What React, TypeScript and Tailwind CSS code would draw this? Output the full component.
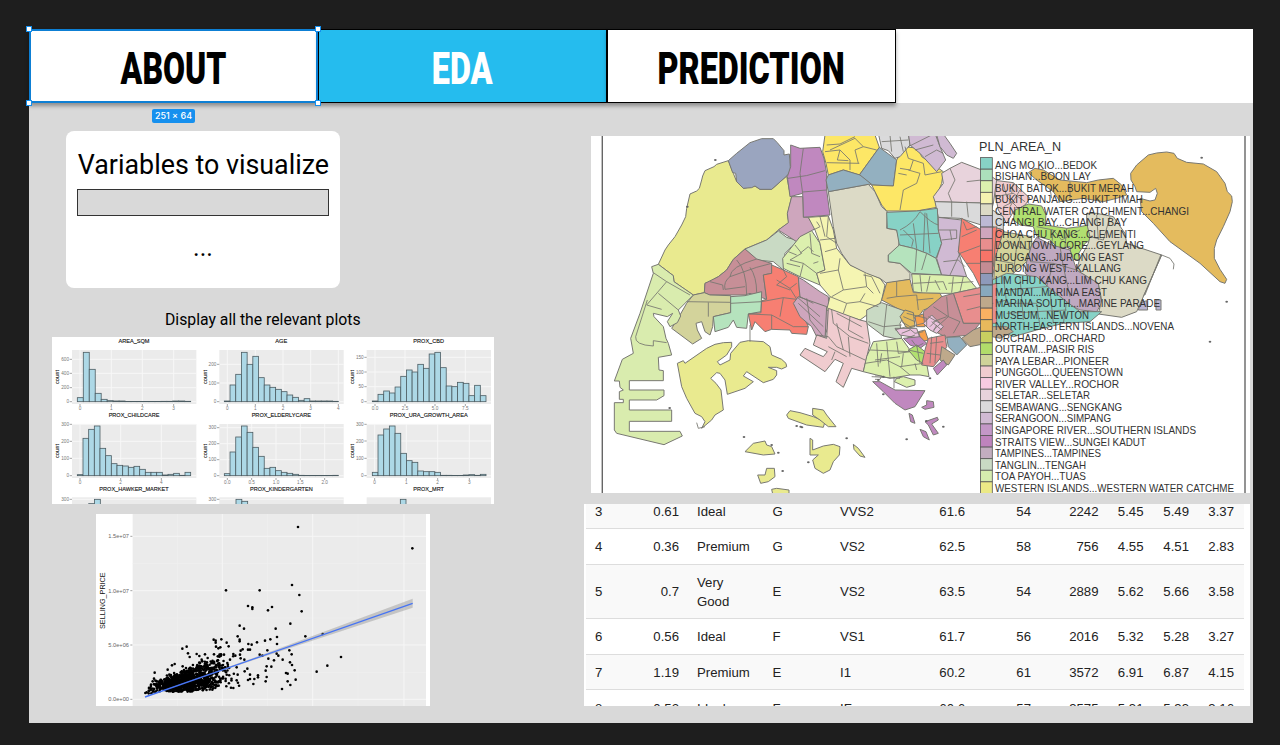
import React from "react";

type Shape = [fill: string, points: string];

const C = {
  yellow: "#e9ea8f", slate: "#9aa5bf", purple: "#c088bf", mauve: "#cea6bd", sage: "#c9dac4", lime: "#dcf0ae",
  cream: "#f5f5b2", beige: "#dcdac6", gold: "#fde766", steel: "#93b0c0", gray: "#dadadb", lilac: "#d0bad3",
  pink: "#e8d3dc", teal: "#87d2c6", mint: "#b5e3bd", red: "#f77f72", orange: "#e4bb5e", salmon: "#e88e8e",
  rose: "#c78f97", blush: "#f0cccf", tan: "#bea98b", tuas: "#d9ecae", olive: "#d3d39b", leaf: "#b1e070",
};

const west: Shape[] = [
  [C.yellow, "415,92 380,103 372,110 345,122 338,138 335,150 328,175 320,183 300,192 290,235 287,260 275,285 255,320 235,345 225,360 205,403 250,437 252,455 285,478 310,495 343,488 345,460 360,455 385,440 410,420 430,388 465,357 530,330 565,300 597,278 592,255 605,200 598,180 590,138 545,178 510,178 495,168 460,175 440,155 430,130"],
  [C.slate, "415,92 440,70 480,38 515,26 550,26 562,38 582,62 582,75 598,72 602,125 590,138 545,178 510,178 495,168 485,173 460,175 440,155 437,130 428,128"],
  [C.sage, "465,357 530,330 565,303 590,322 610,328 625,335 605,350 585,370 580,420 550,395 500,390"],
  [C.rose, "343,488 345,460 385,440 410,420 430,388 465,357 500,387 545,400 545,430 520,435 530,508 480,490 465,495 358,495"],
  [C.olive, "310,495 343,488 360,495 422,497 422,548 370,560 368,590 360,615 345,605 335,575 318,580 322,600 335,625 308,642 245,595 270,555 290,520"],
  [C.mint, "422,500 465,497 515,485 513,545 475,552 470,595 440,592 430,570 415,592 375,605 370,560 422,548"],
  [C.red, "545,405 580,420 625,440 628,480 635,545 655,590 650,613 605,610 600,600 545,598 525,605 495,575 485,600 475,552 513,548 515,512 530,508 520,435 545,430"],
  [C.mauve, "625,442 640,450 690,485 715,500 718,580 700,630 670,590 650,580 635,545 628,480"],
  [C.tuas, "185,410 205,403 250,437 252,455 310,495 265,540 272,558 262,578 240,590 232,575 248,550 232,560 190,550 192,560 220,590 228,625 235,640 245,675 205,682 207,720 220,722 220,752 118,752 118,780 222,780 222,797 200,810 118,810 118,840 245,840 245,874 118,874 118,904 270,904 277,918 222,944 80,910 73,900 73,818 100,818 100,808 88,808 88,785 100,780 90,772 88,753 73,753 97,688 130,670 122,625 150,550 190,430"],
  [C.yellow, "262,700 280,692 285,700 350,655 375,643 400,638 425,637 425,650 410,675 382,695 390,705 420,690 422,670 450,637 475,632 520,635 540,650 545,675 575,688 588,700 590,710 575,717 560,712 535,712 560,722 560,735 550,748 520,758 470,725 460,738 490,755 465,775 412,793 405,750 390,730 380,728 362,745 378,760 393,780 400,840 375,855 365,870 335,895 345,875 335,860 315,850 290,805 275,770"],
  [C.yellow, "465,965 490,940 525,933 530,945 545,950 555,972 520,975"],
  [C.yellow, "503,1035 525,1035 530,1015 553,1015 555,1040 535,1055 512,1060"],
  [C.yellow, "545,1078 560,1075 597,1080 597,1092 548,1092"],
];

const east: Shape[] = [
  [C.purple, "-28,45 0,55 60,52 72,85 80,130 80,180 90,255 10,262 8,190 -30,200 -38,140 -28,110"],
  [C.mauve, "-25,200 8,200 10,262 25,262 45,295 10,320 -10,335 -65,300 -35,278 -38,250"],
  [C.lime, "0,320 35,302 60,340 75,420 50,430 60,465 0,440 -50,415 -52,385 -20,345"],
  [C.cream, "25,262 85,258 100,300 110,355 150,405 240,445 255,465 245,510 235,530 180,570 80,540 90,500 60,465 50,430 75,420 60,340 45,300"],
  [C.beige, "85,185 205,163 225,185 245,230 262,245 260,295 290,300 298,330 295,355 265,375 265,395 300,400 330,430 330,448 260,460 240,445 200,430 150,405 125,370 110,340 100,290"],
  [C.gold, "75,15 225,15 238,52 178,135 130,120 85,135 78,100 68,65"],
  [C.steel, "238,52 290,90 280,168 215,165 178,135"],
  [C.steel, "85,135 130,120 180,135 215,163 205,163 85,185 78,150"],
  [C.gold, "315,50 355,55 365,80 430,125 425,160 405,210 410,232 350,243 260,243 245,225 215,165 280,168 290,90"],
  [C.gray, "235,10 325,10 330,45 300,80 285,85 265,62 245,55"],
  [C.lilac, "325,10 405,10 420,50 437,90 410,125 360,70 330,45"],
  [C.lilac, "410,15 430,12 450,40 470,70 460,85 440,75 420,50"],
  [C.pink, "425,130 450,115 485,97 545,120 590,150 580,220 405,215 400,200 430,160"],
  [C.gray, "405,215 580,220 560,290 480,265 415,262"],
  [C.teal, "260,247 350,243 412,235 415,300 425,340 408,385 380,370 340,355 298,345 290,300 262,295"],
  [C.mint, "298,345 340,355 380,370 408,385 425,435 335,430 300,400 265,395 265,375"],
  [C.lilac, "415,262 485,270 485,310 475,365 500,440 425,435 410,385 425,340 415,300"],
  [C.red, "485,265 545,300 590,290 580,410 540,470 520,430 475,365"],
  [C.lime, "335,432 425,435 500,440 530,475 460,490 370,490 340,485"],
  [C.orange, "260,458 330,448 340,488 420,490 428,505 400,530 370,540 350,568 310,545 245,510"],
  [C.salmon, "460,490 530,475 590,460 590,580 490,580"],
  [C.rose, "425,500 460,490 490,580 540,580 510,615 440,622 395,600 370,575 370,545"],
  [C.sage, "200,540 245,518 320,545 300,580 305,630 250,618 200,580"],
  [C.mauve, "-5,500 80,530 75,630 50,620 35,590 0,560 -20,520"],
  [C.blush, "85,535 180,570 200,575 210,640 190,725 155,715 130,772 108,755 130,700 105,688 75,725 0,675 15,655 70,680 82,665 40,645 50,615 80,625"],
  [C.lime, "220,635 305,625 330,660 380,700 387,740 360,735 330,735 270,745 190,725 200,680"],
  [C.orange, "300,560 315,540 340,548 345,590 320,595"],
  ["#f7a04c", "345,560 370,552 375,590 350,590"],
  ["#f7a04c", "355,605 375,600 385,630 365,635"],
  ["#e9c2dd", "370,580 395,555 430,590 410,610 390,600"],
  ["#e9c2dd", "285,595 350,595 360,625 300,615"],
  [C.purple, "310,625 360,620 380,640 360,655 330,645"],
  [C.leaf, "325,660 350,645 375,665 370,700 350,690"],
  [C.salmon, "385,625 435,615 440,650 425,680 400,710 365,705 375,660"],
  [C.steel, "440,622 480,620 500,645 470,675 445,650"],
  [C.tan, "485,625 520,600 545,590 575,580 560,640 510,650"],
  [C.tan, "425,650 465,675 445,705 420,690"],
  [C.purple, "400,715 430,690 440,705 412,735"],
  [C.lime, "283,755 290,745 310,740 345,750 345,765 320,772"],
  [C.purple, "218,755 240,755 285,780 375,782 345,830 315,840 285,820 250,785"],
  [C.purple, "365,832 380,825 380,812 400,815 402,832 375,838"],
  [C.purple, "327,850 337,855 345,880 332,875"],
  [C.purple, "360,898 378,905 388,930 370,920"],
  [C.purple, "375,875 412,862 415,870 395,882 415,910 400,915 385,885"],
  [C.yellow, "-40,855 -30,842 0,848 40,860 75,875 70,892 20,885 -35,865"],
  [C.yellow, "38,835 70,840 80,855 108,890 85,890 60,870 38,855"],
  [C.yellow, "30,925 38,930 38,960 70,948 100,943 120,950 118,975 100,995 90,1020 70,1030 45,1015 38,990 55,975 30,975"],
  [C.yellow, "160,943 175,955 195,982 180,978 162,958"],
];

const farEast: Shape[] = [
  [C.orange, "482,130 500,105 535,75 560,69 590,66 612,70 622,85 650,97 700,102 740,125 765,160 772,185 785,198 787,215 780,245 760,290 740,330 733,355 733,385 750,418 770,448 765,460 750,455 690,400 600,335 550,280 515,245 510,205 540,213 555,210 562,190 557,175 540,187 500,185 495,170 483,150"],
  [C.orange, "175,128 195,115 220,120 270,150 350,158 385,150 430,145 455,165 470,195 440,205 400,215 340,205 270,215 250,185 200,150"],
  [C.blush, "67,150 130,158 180,205 165,225 130,245 110,280 85,240"],
  [C.gray, "67,240 100,260 100,300 67,290"],
  [C.red, "67,290 100,300 105,320 90,345 67,440"],
  [C.olive, "100,305 185,320 185,345 170,395 130,430 70,470 75,385"],
  [C.leaf, "130,270 135,240 175,222 215,228 228,255 225,285 290,295 330,290 355,285 362,330 345,340 325,372 328,390 305,388 300,350 265,355 240,330 200,318 190,290 150,285"],
  ["#bfa9c0", "200,322 245,345 300,360 320,420 385,460 395,520 380,545 330,540 290,520 200,455 165,430 170,395 185,345"],
  [C.beige, "350,250 380,250 430,260 465,310 470,340 575,375 520,500 500,545 455,562 385,552 395,510 385,460 320,420 328,390 355,340 360,320 350,280"],
  [C.teal, "67,450 110,430 200,440 245,480 290,515 330,545 395,545 360,575 280,580 200,600 130,620 90,600 67,590"],
  [C.tan, "67,590 110,590 130,605 90,625 67,620"],
  ["#b9b5d2", "513,518 530,512 533,540 505,540"],
  ["#b9b5d2", "558,510 573,510 573,540 558,540"],
];

const westLines =
  "M190,428 L230,455 L170,525 M230,455 L300,495 M205,490 L265,540 M170,525 L215,538 M172,510 L137,620 Q133,645 190,648 L190,632 L230,638 M440,390 Q470,420 470,495 M500,387 Q420,410 420,440 Q400,455 405,478 L465,470 M480,412 Q500,440 500,488 M420,440 L500,412 L545,400 M360,455 L398,465 L400,480 M290,515 L422,517 M355,517 L355,560 M422,520 L515,515 M515,515 L580,503 L570,560 M580,503 L635,510 M475,552 L545,555 L610,590 L655,590 M545,555 L545,598 M560,450 L600,475 L628,520 M600,475 L620,460 M580,420 L590,440 L560,465 L600,480 M480,585 L480,635 M320,878 L325,895 L345,890 M605,235 L640,235 M608,270 Q630,260 642,262";

const eastLines =
  "M10,55 L0,130 L8,190 M-36,145 Q20,140 75,122 M8,186 L80,180 M90,60 L165,25 L190,50 L165,60 L175,100 M75,65 L120,60 L150,90 L150,120 M120,60 L112,90 L145,92 M80,98 L178,100 M165,20 L120,42 L80,45 M190,50 L230,60 M245,35 L325,30 M270,15 L275,65 M300,20 L310,65 M325,50 L395,15 M345,60 L400,45 M375,80 L410,60 L430,70 M315,50 L325,85 L340,90 L330,120 L300,115 M325,120 L360,130 L350,160 L310,180 L300,240 M340,90 L370,100 L375,135 L425,125 M295,130 L320,135 M450,115 L465,150 L445,190 L455,215 M500,155 L545,150 M500,215 L505,262 M455,215 L455,260 M300,300 Q340,280 360,245 Q395,280 415,285 M375,248 L370,365 M300,315 L415,310 M340,280 L350,355 L345,425 M380,250 L390,370 M310,300 L340,330 L335,350 M380,370 L365,420 M415,300 L470,300 L470,325 L425,330 M450,300 L455,330 M430,395 L475,390 L495,410 M450,435 L480,370 M485,320 L530,300 M480,370 L560,340 M490,275 L500,300 L530,290 M500,400 L580,400 M340,460 L430,455 L440,480 M360,435 L365,485 M390,438 L380,485 M405,450 L420,480 M460,440 L455,488 M490,440 L480,485 M445,460 L520,455 M290,455 L290,500 L350,495 L355,540 M290,500 L260,505 M350,510 L400,505 M440,500 L445,560 L480,575 M400,530 L445,560 M490,500 L550,490 M500,540 L580,520 M445,560 L400,600 M40,300 L60,290 L50,275 M60,260 L75,320 M85,260 L80,320 L110,340 M60,330 L105,325 M75,365 L110,355 M60,430 L115,420 L120,385 M115,420 L130,480 L95,500 M130,480 L200,470 L220,490 M200,470 L195,430 M190,435 L215,440 L240,490 M90,500 L140,520 L180,515 L235,530 M140,520 L130,550 M180,515 L195,490 M-15,345 L5,370 L-30,390 L10,400 L0,440 M-35,365 L-10,375 M0,370 L25,350 L40,365 M10,400 L50,430 M-40,400 L0,410 M30,310 L35,370 L60,380 M40,400 L55,395 M0,500 L40,520 M-5,520 L70,590 M20,505 L30,570 L70,620 M-10,500 L60,560 M95,540 L100,580 L150,620 L205,640 M150,560 L145,600 L190,625 M110,550 L185,590 M50,615 L85,620 L110,650 L195,690 M110,580 L130,660 M145,620 L150,680 M85,650 L140,680 M95,690 L105,665 M260,525 L250,618 M205,575 L250,590 L305,585 M305,575 L330,590 L370,580 M310,560 L345,575 M320,550 L380,565 L380,590 M285,600 L320,590 L345,610 L370,605 M305,610 L330,600 M320,625 L345,615 M335,630 L350,650 L370,640 M385,560 L420,580 M390,590 L410,570 M395,575 L425,600 M400,605 L410,585 M325,660 L370,670 M350,645 L360,700 M390,640 L430,635 M395,620 L390,700 M380,670 L420,675 M410,620 L405,700 M440,560 L400,575 M480,575 L460,610 M210,660 L330,665 M230,640 L235,710 M260,635 L270,740 M290,635 L295,670 L330,665 M195,700 L260,690 L300,710 L370,700 M310,670 L305,710 M225,690 L300,680 M245,670 L240,700 M300,710 L330,735 M345,700 L350,720 M215,740 L300,745 M282,740 L282,775 M225,738 L245,738 L240,748 L225,748";

const farEastLines =
  "M575,375 L520,500 M573,373 L525,495 M575,375 L600,385 L612,402 L610,418 M470,340 L500,350 M100,160 L110,200 L140,230 M75,200 L130,190 L165,215 M100,230 L130,215 M150,180 L120,230 M130,160 L125,190 M200,290 L250,300 L245,345 M250,300 L275,330 L330,300 M290,295 L285,350 M180,395 L250,400 L320,420 M250,400 L230,470 M270,350 L280,410 L300,500 M110,330 L140,350 L130,430 M75,390 L130,400 M150,320 L145,350 L180,360 M100,440 L110,520 L200,520 L210,590 M110,480 L230,470 M150,440 L160,570 M70,520 L110,510 M110,550 L290,540 M240,480 L250,580 M290,515 L280,580 M360,320 L400,330 L420,260 M380,255 L385,330 M240,175 L245,205 M300,155 L300,205";

const specks: [number, number][] = [[376, 90], [292, 230], [239, 834], [462, 921], [620, 888], [632, 890], [578, 1023], [565, 968], [770, 925], [655, 997], [636, 892], [1835, 83], [1910, 515], [1860, 635], [950, 928], [545, 945], [1009, 873], [1060, 890], [880, 793], [880, 740], [1020, 745], [865, 750]];

const legend: [string, string, number][] = [
  ["ANG MO KIO...BEDOK", "#87d2c6", 102], ["BISHAN...BOON LAY", "#acdfbb", 96], ["BUKIT BATOK...BUKIT MERAH", "#dcf0ae", 139],
  ["BUKIT PANJANG...BUKIT TIMAH", "#f5f2b0", 148], ["CENTRAL WATER CATCHMENT...CHANGI", "#dcdac6", 194], ["CHANGI BAY...CHANGI BAY", "#bcb9d4", 132],
  ["CHOA CHU KANG...CLEMENTI", "#cea6bd", 141], ["DOWNTOWN CORE...GEYLANG", "#e88e8e", 149], ["HOUGANG...JURONG EAST", "#f77468", 129],
  ["JURONG WEST...KALLANG", "#c48c94", 126], ["LIM CHU KANG...LIM CHU KANG", "#8e9aba", 152], ["MANDAI...MARINA EAST", "#88a9bd", 112],
  ["MARINA SOUTH...MARINE PARADE", "#bea98b", 165], ["MUSEUM...NEWTON", "#fab062", 94], ["NORTH-EASTERN ISLANDS...NOVENA", "#e8b95c", 179],
  ["ORCHARD...ORCHARD", "#c8cf60", 110], ["OUTRAM...PASIR RIS", "#b1dc6a", 99], ["PAYA LEBAR...PIONEER", "#cfd399", 114],
  ["PUNGGOL...QUEENSTOWN", "#f0cccf", 128], ["RIVER VALLEY...ROCHOR", "#f7cbe1", 124], ["SELETAR...SELETAR", "#e8d3dc", 95],
  ["SEMBAWANG...SENGKANG", "#dadadb", 127], ["SERANGOON...SIMPANG", "#d0bad3", 116], ["SINGAPORE RIVER...SOUTHERN ISLANDS", "#c397c7", 201],
  ["STRAITS VIEW...SUNGEI KADUT", "#be83bd", 151], ["TAMPINES...TAMPINES", "#c2adbf", 106], ["TANGLIN...TENGAH", "#c9dac4", 91],
  ["TOA PAYOH...TUAS", "#d5ecae", 91], ["WESTERN ISLANDS...WESTERN WATER CATCHME", "#ebe986", 239],
];

function Regions({ shapes, lines, x }: { shapes: Shape[]; lines: string; x: number }) {
  return (
    <g transform={`translate(${x} 0)`} stroke="#777771" strokeWidth="3" strokeLinejoin="round">
      {shapes.map(([fill, points], i) => (
        <polygon key={i} points={points} fill={fill} />
      ))}
      <path d={lines} fill="none" strokeWidth="2.6" />
    </g>
  );
}

function PlanningMap() {
  return (
    <svg className="ml-[7px] block h-[357px] w-[659px] bg-white" viewBox="591 136 659 357">
      <g transform="translate(590 130) scale(0.33333)">
        <Regions shapes={west} lines={westLines} x={0} />
        <Regions shapes={farEast} lines={farEastLines} x={1140} />
        <Regions shapes={east} lines={eastLines} x={630} />
        {specks.map(([x, y], i) => (
          <ellipse key={i} cx={x} cy={y} rx="4" ry="3" fill="#666" />
        ))}
      </g>
      <path d="M602.3 136V493M1245 136V493" stroke="#666" strokeWidth="1.4" />
      <text x="979" y="151" fontSize="13" textLength="82" lengthAdjust="spacingAndGlyphs" fill="#333" fontFamily="Liberation Sans, sans-serif">
        PLN_AREA_N
      </text>
      {legend.map(([label, fill, w], i) => (
        <g key={label}>
          <rect x="980.5" y={157.6 + i * 11.58} width="11.8" height="11.58" fill={fill} stroke="#555" strokeWidth="0.8" />
          <text x="995" y={168.6 + i * 11.54} fontSize="10.4" textLength={w} lengthAdjust="spacingAndGlyphs" fill="#333" fontFamily="Liberation Sans, sans-serif">
            {label}
          </text>
        </g>
      ))}
    </svg>
  );
}

interface Hist {
  title: string; tw: number; px: number; py: number; start: number; end: number; base: number; tops: number[];
  ys: [string, number][]; xs: [string, number][];
}

const hists: Hist[] = [
  { title: "AREA_SQM", tw: 93, px: 66, py: 45, start: 82, end: 422, base: 200, tops: [188, 52, 103, 175, 193, 197, 198, 198, 199.5, 199.5, 199.5, 199.5, 199.5, 199.5, 199, 199, 198, 198, 199], ys: [["600", 73], ["400", 115], ["200", 158], ["0", 200]], xs: [["0", 90], ["1", 184], ["2", 277], ["3", 371]] },
  { title: "AGE", tw: 36, px: 508, py: 45, start: 523, end: 865, base: 200, tops: [198, 150, 118, 52, 88, 64, 128, 150, 157, 163, 170, 180, 187, 196, 191, 198, 198, 198, 198, 199], ys: [["200", 88], ["100", 144], ["0", 200]], xs: [["0", 532], ["1", 616], ["2", 699], ["3", 782], ["4", 865]] },
  { title: "PROX_CBD", tw: 92, px: 950, py: 45, start: 967, end: 1308, base: 200, tops: [198, 178, 168, 174, 156, 124, 105, 111, 88, 100, 57, 52, 98, 153, 155, 142, 145, 182, 151, 182], ys: [["150", 67], ["100", 111], ["50", 155], ["0", 200]], xs: [["0.0", 975], ["2.5", 1065], ["5.0", 1155], ["7.5", 1246]] },
  { title: "PROX_CHILDCARE", tw: 152, px: 66, py: 267, start: 82, end: 422, base: 422, tops: [419, 310, 283, 273, 340, 362, 386, 391, 393, 397, 394, 403, 412, 412, 412, 420, 418, 415, 421, 412], ys: [["300", 268], ["200", 319], ["100", 370], ["0", 422]], xs: [["0", 90], ["2", 212], ["4", 334]] },
  { title: "PROX_ELDERLYCARE", tw: 178, px: 508, py: 267, start: 523, end: 865, base: 422, tops: [416, 351, 306, 273, 292, 337, 364, 400, 397, 407, 412, 415, 418, 421, 421.5, 421.5, 421.5, 421.5, 421.5, 421], ys: [["300", 278], ["200", 326], ["100", 374], ["0", 422]], xs: [["0.0", 532], ["0.5", 605], ["1.0", 678], ["1.5", 751], ["2.0", 824]] },
  { title: "PROX_URA_GROWTH_AREA", tw: 234, px: 950, py: 267, start: 967, end: 1308, base: 422, tops: [412, 300, 282, 273, 295, 355, 377, 382, 408, 410, 410, 412, 421, 421, 421.5, 421.5, 420, 419, 421, 418], ys: [["300", 268], ["200", 318], ["100", 370], ["0", 422]], xs: [["0", 974], ["1", 1069], ["2", 1163], ["3", 1258]] },
  { title: "PROX_HAWKER_MARKET", tw: 208, px: 66, py: 487, start: 116, end: 151, base: 640, tops: [506, 493], ys: [["300", 493]], xs: [] },
  { title: "PROX_KINDERGARTEN", tw: 188, px: 508, py: 487, start: 558, end: 593, base: 640, tops: [493, 499], ys: [["300", 493]], xs: [] },
  { title: "PROX_MRT", tw: 92, px: 950, py: 487, start: 1051, end: 1068, base: 640, tops: [493], ys: [], xs: [] },
];

function Histograms() {
  return (
    <svg className="mt-2 ml-[23px] block h-[167px] w-[442px] bg-white" viewBox="6 6 1326 501" fontFamily="Liberation Sans, sans-serif">
      {hists.map((h) => {
        const bw = (h.end - h.start) / h.tops.length;
        return (
          <g key={h.title}>
            <rect x={h.px} y={h.py} width="373" height="162" fill="#ebebeb" />
            {h.ys.map(([t, y]) => (
              <g key={t}>
                <path d={`M${h.px} ${y}h373`} stroke="#f7f7f7" strokeWidth="3" />
                <path d={`M${h.px - 7} ${y}h7`} stroke="#777" strokeWidth="2" />
                <text x={h.px - 9} y={y + 5} fontSize="14" textAnchor="end" fill="#777">{t}</text>
              </g>
            ))}
            {h.xs.map(([t, x]) => (
              <g key={t}>
                <path d={`M${x} ${h.py}v162`} stroke="#f7f7f7" strokeWidth="3" />
                <path d={`M${x} ${h.py + 162}v6`} stroke="#777" strokeWidth="2" />
                <text x={x} y={h.py + 180} fontSize="14" textAnchor="middle" fill="#777">{t}</text>
              </g>
            ))}
            {h.tops.map((t, i) => (
              <rect key={i} x={h.start + i * bw} y={t} width={bw} height={h.base - t} fill="#add8e6" stroke="#4c5c62" strokeWidth="2.4" />
            ))}
            <text x={h.px + 186} y={h.py - 20} fontSize="18" textAnchor="middle" textLength={h.tw} lengthAdjust="spacingAndGlyphs" fill="#111" stroke="#111" strokeWidth="0.4">
              {h.title}
            </text>
            {h.xs.length > 0 && (
              <text transform={`translate(${h.px - 38} ${h.py + 81}) rotate(-90)`} fontSize="17" textLength="42" lengthAdjust="spacingAndGlyphs" textAnchor="middle" fill="#111" stroke="#111" strokeWidth="0.3">
                count
              </text>
            )}
          </g>
        );
      })}
    </svg>
  );
}

const outliers: [number, number][] = [
  [624, 57], [967, 121], [606, 231], [408, 247], [509, 247], [628, 261], [474, 294], [487, 298], [487, 303], [546, 297], [534, 307], [635, 310],
  [601, 347], [449, 353], [462, 362], [557, 362], [443, 385], [449, 395], [449, 400], [561, 387], [646, 385], [698, 378], [753, 447], [712, 473],
  [680, 491], [371, 395], [377, 398], [377, 404], [394, 394], [410, 404], [378, 416], [385, 421], [391, 418], [416, 415], [475, 408], [485, 410],
  [501, 403], [525, 398], [541, 394], [561, 408], [290, 416], [277, 422], [294, 436], [299, 447], [320, 438], [328, 444], [345, 439], [372, 439],
  [353, 450], [388, 446], [402, 440], [458, 424], [452, 428], [474, 425], [480, 425], [532, 427], [598, 427], [509, 440], [517, 443], [560, 437],
  [565, 443], [605, 439], [430, 438], [436, 443], [450, 440], [535, 452], [552, 457], [578, 455], [600, 463], [606, 471], [614, 487], [588, 495],
  [593, 497], [617, 515], [593, 520], [601, 531], [576, 543], [530, 475], [544, 476], [527, 488], [530, 507], [527, 520], [504, 502], [504, 508],
  [493, 513], [490, 528], [480, 513], [474, 516], [480, 500], [464, 490], [472, 482], [463, 455], [452, 451], [440, 517], [430, 540], [367, 545],
  [194, 494], [192, 512], [183, 530], [246, 472], [254, 468], [233, 485], [278, 475], [443, 500], [440, 478], [420, 455], [412, 465], [335, 455],
  [196, 518], [188, 520], [181, 540], [200, 530], [208, 526], [204, 538], [170, 553], [176, 556], [166, 555], [184, 556], [190, 548], [196, 552],
];

const cloud: [number, number][] = (() => {
  let s = 77;
  const rnd = () => (s = (s * 16807) % 2147483647) / 2147483647;
  const gauss = () => rnd() + rnd() + rnd() + rnd() - 2;
  const pts: [number, number][] = [];
  while (pts.length < 950) {
    const x = 292 + gauss() * 105;
    if (x < 172 || x > 450) continue;
    const d = x - 165;
    const y = 546 - d * 0.2 + gauss() * (13 + d * 0.19);
    if (y > 551 - Math.max(0, d - 130) * 0.07 || y < 530 - d * 0.42) continue;
    if (d < 52 && rnd() < 0.5) continue;
    pts.push([x, y]);
  }
  return pts;
})();

function Scatter() {
  return (
    <svg className="mt-[10px] ml-[67px] block h-[192px] w-[334px] bg-white" viewBox="18 18 1002 576" fontFamily="Liberation Sans, sans-serif">
      <rect x="128" y="16" width="880" height="580" fill="#ebebeb" />
      <path d="M128 166H1008M128 330H1008M128 493H1008M262 16V596M532 16V596M804 16V596" stroke="#f0f0f0" strokeWidth="2" />
      <path d="M128 85H1008M128 248H1008M128 411H1008M128 574H1008M397 16V596M668 16V596M942 16V596" stroke="#f6f6f6" strokeWidth="3" />
      {[["1.5e+07", 85], ["1.0e+07", 248], ["5.0e+06", 411], ["0.0e+00", 574]].map(([t, y]) => (
        <g key={t}>
          <text x="117" y={Number(y) + 6} fontSize="17" textAnchor="end" textLength="62" lengthAdjust="spacingAndGlyphs" fill="#666">{t}</text>
          <path d={`M121 ${y}h6`} stroke="#777" strokeWidth="2" />
        </g>
      ))}
      <text transform="translate(45 278) rotate(-90)" fontSize="22" textAnchor="middle" textLength="170" lengthAdjust="spacingAndGlyphs" fill="#111">
        SELLING_PRICE
      </text>
      {[...cloud, ...outliers].map(([x, y], i) => (
        <circle key={i} cx={x} cy={y} r="3.9" fill="#000" />
      ))}
      <polygon points="165,566 500,446 968,272 968,299 500,453" fill="#8a8a8a" fillOpacity="0.4" />
      <path d="M165 567L968 286" stroke="#4674f5" strokeWidth="4" />
    </svg>
  );
}

const rows: string[][] = [
  ["3", "0.61", "Ideal", "G", "VVS2", "61.6", "54", "2242", "5.45", "5.49", "3.37"],
  ["4", "0.36", "Premium", "G", "VS2", "62.5", "58", "756", "4.55", "4.51", "2.83"],
  ["5", "0.7", "Very Good", "E", "VS2", "63.5", "54", "2889", "5.62", "5.66", "3.58"],
  ["6", "0.56", "Ideal", "F", "VS1", "61.7", "56", "2016", "5.32", "5.28", "3.27"],
  ["7", "1.19", "Premium", "E", "I1", "60.2", "61", "3572", "6.91", "6.87", "4.15"],
  ["8", "0.52", "Ideal", "F", "IF", "60.6", "57", "3575", "5.31", "5.33", "3.16"],
];

const cellClass = ["pl-[9px]", "text-right", "pl-[18px] pr-4", "", "", "text-right", "text-right", "text-right", "text-right", "text-right", "text-right"];

function DiamondTable() {
  return (
    <div className="mt-[11px] h-[202px] w-[666px] overflow-hidden bg-white pr-[6px] pl-[2px]">
      <div className="-mt-[10.6px] text-[13.2px] leading-[19px] text-[#222]">
        {rows.map((r, i) => (
          <div
            key={r[0]}
            className={`grid grid-cols-[34px_59px_93.5px_67.5px_85px_40px_66px_67.5px_45px_45.5px_45px] items-center border-b border-[#ddd] pt-px ${r[2] === "Very Good" ? "h-[54.3px]" : "h-[35.7px]"} ${i % 2 ? "bg-white" : "bg-[#f9f9f9]"}`}
          >
            {r.map((v, j) => (
              <span key={j} className={cellClass[j]}>{v}</span>
            ))}
          </div>
        ))}
      </div>
    </div>
  );
}

function Tab({ label, active, scale }: { label: string; active?: boolean; scale: string }) {
  return (
    <div className={`flex w-[289px] items-center justify-center border border-black shadow-[0_3px_4px_rgba(0,0,0,0.35)] ${active ? "bg-[#25bcee] text-white" : "bg-white text-black"}`}>
      <span className={`pt-[5px] text-[45px] leading-none font-black whitespace-nowrap ${scale}`}>{label}</span>
    </div>
  );
}

const handles = ["-top-[5px] -left-[5px]", "-top-[5px] -right-[5px]", "-bottom-[5px] -left-[5px]", "-right-[5px] -bottom-[5px]"];

export default function App() {
  return (
    <div className="h-[745px] w-[1280px] overflow-hidden bg-[#1e1e1e] pt-[29px] pl-[29px] font-['Liberation_Sans',sans-serif]">
      <div className="h-[694px] w-[1224px] bg-[#d9d9d9]">
        <header className="relative flex h-[74px] bg-white font-[Roboto,sans-serif]">
          <Tab label="ABOUT" scale="scale-x-[0.71]" />
          <Tab label="EDA" active scale="scale-x-[0.72]" />
          <Tab label="PREDICTION" scale="scale-x-[0.72]" />
          <div className="absolute top-0 left-0 h-[74px] w-[289px] border-2 border-[#0d7fd4]">
            {handles.map((h) => (
              <i key={h} className={`absolute h-[6px] w-[6px] border border-[#1690ee] bg-white ${h}`} />
            ))}
          </div>
          <span className="absolute top-[80px] left-[123px] flex h-[14px] w-[43px] items-center justify-center rounded-[2px] bg-[#1690ee] font-[Inter,sans-serif] text-[9px] font-medium whitespace-nowrap text-white">
            251 × 64
          </span>
        </header>

        <main className="flex">
          <section className="w-[555px] shrink-0 font-[Roboto,sans-serif] text-black">
            <div className="mt-[28px] ml-[37px] flex h-[157px] w-[274px] flex-col items-center rounded-lg bg-white pt-[16px]">
              <h2 className="scale-x-[0.994] text-[27px] leading-[36px] whitespace-nowrap">Variables to visualize</h2>
              <div className="mt-[6px] h-[27px] w-[252px] border border-[#333] bg-[#d9d9d9]" />
              <p className="mt-[16px] text-[25px] leading-[32px] font-normal">...</p>
            </div>
            <p className="mt-[21px] ml-[136px] h-5 w-[195px] origin-left scale-x-[0.985] text-[16px] leading-[21px] font-normal whitespace-nowrap">
              Display all the relevant plots
            </p>
            <Histograms />
            <Scatter />
          </section>
          <section className="pt-[33px]">
            <PlanningMap />
            <DiamondTable />
          </section>
        </main>
      </div>
    </div>
  );
}
